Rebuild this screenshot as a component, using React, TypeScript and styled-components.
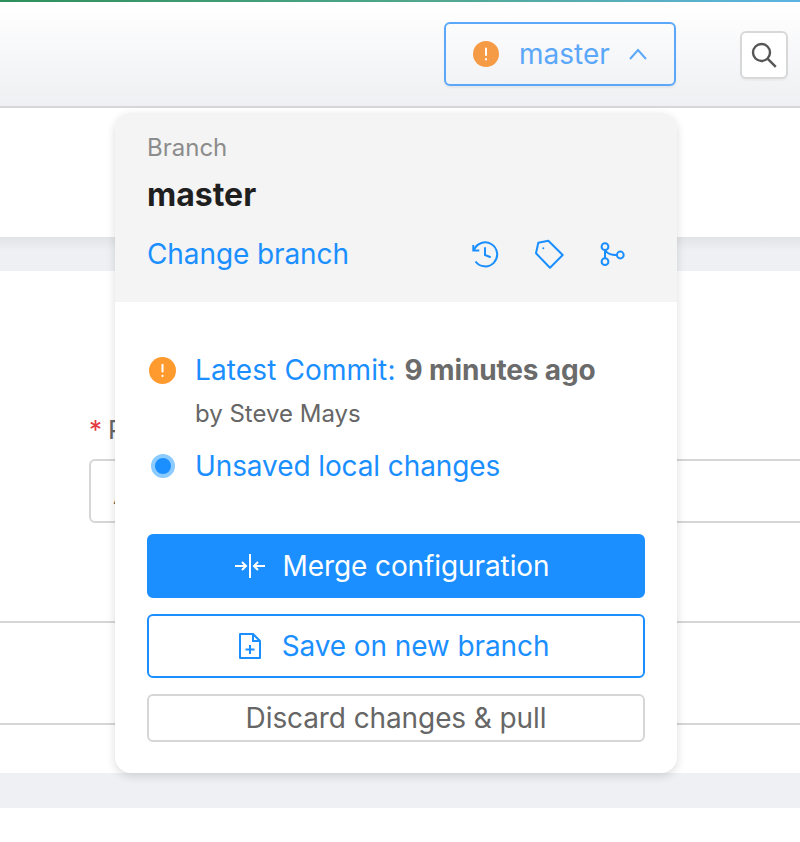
import { createGlobalStyle, styled } from 'styled-components';

const GlobalStyle = createGlobalStyle`
  html, body {
    margin: 0;
    padding: 0;
    background: #fff;
    overflow: hidden;
  }
  body {
    font-family: Inter, "Liberation Sans", sans-serif;
  }
`

const Page = styled.div`
  position: relative;
  width: 800px;
  height: 842px;
  overflow: hidden;
  background: #fff;
`

const TopLine = styled.div`
  height: 2px;
  background: linear-gradient(90deg, #2f8f5b 0%, #52a88f 55%, #5db4e4 100%);
`

const Header = styled.header`
  box-sizing: border-box;
  height: 106px;
  display: flex;
  justify-content: flex-end;
  align-items: flex-start;
  background: linear-gradient(180deg, #fff 0%, #eff0f3 100%);
  border-bottom: 2px solid #d6d6d6;
`

const BranchButton = styled.button`
  box-sizing: border-box;
  width: 232px;
  height: 64px;
  margin-top: 20px;
  margin-right: 64px;
  padding: 0 27px;
  display: flex;
  align-items: center;
  background: transparent;
  border: 2px solid #5ba7f9;
  border-radius: 6px;
  box-shadow: 0 2px 2px rgba(0, 0, 0, 0.05);
  color: #5ba7f9;
  font: 400 28px Inter, sans-serif;
`

const BranchName = styled.span`
  margin-left: 20px;
  margin-right: auto;
`

const SearchButton = styled.button`
  box-sizing: border-box;
  width: 48px;
  height: 48px;
  margin-top: 29px;
  margin-right: 12px;
  padding: 0;
  display: flex;
  align-items: center;
  justify-content: center;
  background: #fff;
  border: 2px solid #d8d8d8;
  border-radius: 6px;
  box-shadow: 0 2px 2px rgba(0, 0, 0, 0.04);
`

const TopSection = styled.section`
  height: 129px;
  background: #fff;
`

const Band = styled.div<{ $shaded?: boolean }>`
  height: ${p => (p.$shaded ? 34 : 35)}px;
  background: ${p => (p.$shaded ? 'linear-gradient(180deg, #e2e3e6 0%, #eff0f3 40%)' : '#eff0f3')};
`

const FormSection = styled.section`
  box-sizing: border-box;
  height: 502px;
  padding-top: 144px;
  background: #fff;
`

const FieldLabel = styled.label`
  display: block;
  height: 44px;
  margin-left: 89px;
  font-size: 26px;
  line-height: 30px;
  color: #666;
`

const Required = styled.span`
  margin-right: 6px;
  color: #e5393f;
`

const TextInput = styled.div`
  box-sizing: border-box;
  width: 800px;
  height: 64px;
  margin-left: 89px;
  padding: 6px 0 0 22px;
  display: flex;
  align-items: center;
  border: 2px solid #d6d6d6;
  border-radius: 6px;
  font-size: 26px;
  color: #666;
`

const Row = styled.div<{ $height: number }>`
  height: ${p => p.$height}px;
  border-bottom: 2px solid #d6d6d6;
`

const Popover = styled.div`
  position: absolute;
  left: 115px;
  top: 113px;
  width: 562px;
  height: 660px;
  overflow: hidden;
  background: #fff;
  border-radius: 16px;
  box-shadow: 0 3px 10px rgba(0, 0, 0, 0.14);
`

const PopoverHead = styled.div`
  box-sizing: border-box;
  height: 189px;
  padding: 20px 32px 0;
  background: #f4f4f4;
`

const SmallLabel = styled.div`
  font-size: 24px;
  line-height: 30px;
  color: #8c8c8c;
`

const CurrentBranch = styled.div`
  margin-top: 14px;
  font-size: 32px;
  line-height: 36px;
  font-weight: 700;
  color: #1f1f1f;
`

const HeadActions = styled.div`
  margin-top: 23px;
  display: flex;
  align-items: center;
`

const LinkText = styled.span`
  font-size: 28px;
  line-height: 36px;
  letter-spacing: -0.1px;
  color: #1b8fff;
`

const CommitLabel = styled(LinkText)`
  letter-spacing: 0.12px;
`

const IconRow = styled.div`
  margin-left: auto;
  margin-right: 16px;
  display: flex;
  align-items: center;
  gap: 32px;
  color: #1b8fff;
`

const PopoverBody = styled.div`
  box-sizing: border-box;
  padding: 50px 32px 0;
`

const StatusRow = styled.div`
  display: flex;
  align-items: center;
  height: 36px;
`

const StatusIcon = styled.div`
  width: 48px;
  flex: none;
  display: flex;
  align-items: center;
  padding-left: 2px;
  box-sizing: border-box;
`

const CommitTime = styled.span`
  margin-left: 9px;
  font-size: 28px;
  line-height: 36px;
  font-weight: 700;
  letter-spacing: -0.15px;
  color: #6b6b6b;
`

const Author = styled.div`
  margin: 10px 0 18px 48px;
  font-size: 24px;
  line-height: 32px;
  color: #666;
`

const Dot = styled.div`
  box-sizing: border-box;
  width: 24px;
  height: 24px;
  margin-left: 2px;
  border-radius: 50%;
  background: #1b8fff;
  border: 4px solid #8ccbff;
`

const Actions = styled.div`
  margin-top: 50px;
  display: flex;
  flex-direction: column;
  gap: 16px;
`

const ActionButton = styled.button<{ $kind: 'primary' | 'outline' | 'plain' }>`
  box-sizing: border-box;
  width: 498px;
  height: ${p => (p.$kind === 'plain' ? 48 : 64)}px;
  padding: 0 ${p => (p.$kind === 'primary' ? 8 : p.$kind === 'outline' ? 4 : 0)}px 0 0;
  display: flex;
  align-items: center;
  justify-content: center;
  gap: ${p => (p.$kind === 'primary' ? 18 : 21)}px;
  border-radius: 6px;
  font: 400 28px Inter, sans-serif;
  letter-spacing: -0.1px;
  background: ${p => (p.$kind === 'primary' ? '#1b8fff' : '#fff')};
  color: ${p => (p.$kind === 'primary' ? '#fff' : p.$kind === 'outline' ? '#1b8fff' : '#666')};
  border: 2px solid ${p => (p.$kind === 'plain' ? '#d6d6d6' : '#1b8fff')};
`

const WarnIcon = ({ size, color }: { size: number; color: string }) => (
  <svg width={size} height={size} viewBox="0 0 26 26">
    <circle cx="13" cy="13" r="13" fill={color} />
    <rect x="12" y="6.5" width="2" height="8.5" rx="1" fill="#fff" />
    <rect x="12" y="17" width="2" height="2.4" rx="1" fill="#fff" />
  </svg>
)

const Icon = styled.svg.attrs({ fill: 'none', stroke: 'currentColor', strokeWidth: 2 })`
  display: block;
  flex: none;
`

export default function App() {
  return (
    <Page>
      <GlobalStyle />
      <TopLine />
      <Header>
        <BranchButton>
          <WarnIcon size={26} color="#f59b45" />
          <BranchName>master</BranchName>
          <Icon width="18" height="12" viewBox="0 0 18 12">
            <path d="M1 11 9 2l8 9" />
          </Icon>
        </BranchButton>
        <SearchButton>
          <svg width="28" height="28" viewBox="0 0 28 28" fill="none" stroke="#555" strokeWidth="2.4">
            <circle cx="11.500" cy="11.500" r="8.500" />
            <path d="m17.800 17.800 8 8" />
          </svg>
        </SearchButton>
      </Header>
      <TopSection />
      <Band $shaded />
      <FormSection>
        <FieldLabel>
          <Required>*</Required>Project
        </FieldLabel>
        <TextInput>A</TextInput>
        <Row $height={98} />
        <Row $height={100} />
      </FormSection>
      <Band />
      <Popover>
        <PopoverHead>
          <SmallLabel>Branch</SmallLabel>
          <CurrentBranch>master</CurrentBranch>
          <HeadActions>
            <LinkText>Change branch</LinkText>
            <IconRow>
              <Icon width="32" height="32" viewBox="0 0 32 32">
                <path d="M4.300 7v5.500h6" />
                <path d="M5 12A12 12 0 1 1 6.500 23.500" />
                <path d="M16 9.300V17l5.700 2.300" />
              </Icon>
              <Icon width="32" height="32" viewBox="0 0 32 32">
                <path d="M5.300 4.700 15.300 2.700 29.700 17 17 29.700 3 15.300Z" strokeLinejoin="round" />
                <circle cx="10.300" cy="10.300" r="1" fill="currentColor" stroke="none" />
              </Icon>
              <Icon width="32" height="32" viewBox="0 0 32 32">
                <circle cx="8" cy="8.700" r="3.400" />
                <circle cx="8" cy="23.700" r="3.400" />
                <circle cx="23.300" cy="17" r="3.400" />
                <path d="M8 12v8M8.500 12c1 3 4 5 11.400 5" />
              </Icon>
            </IconRow>
          </HeadActions>
        </PopoverHead>
        <PopoverBody>
          <StatusRow>
            <StatusIcon>
              <WarnIcon size={27} color="#ff9a2f" />
            </StatusIcon>
            <CommitLabel>Latest Commit:</CommitLabel>
            <CommitTime>9 minutes ago</CommitTime>
          </StatusRow>
          <Author>by Steve Mays</Author>
          <StatusRow>
            <StatusIcon>
              <Dot />
            </StatusIcon>
            <LinkText>Unsaved local changes</LinkText>
          </StatusRow>
          <Actions>
            <ActionButton $kind="primary">
              <Icon width="30" height="24" viewBox="0 0 30 24">
                <path d="M15 0v24M0 12h11M7 8l4 4-4 4M30 12H19M23 8l-4 4 4 4" />
              </Icon>
              Merge configuration
            </ActionButton>
            <ActionButton $kind="outline">
              <Icon width="22" height="26" viewBox="0 0 22 26">
                <path d="M1 1h13l7 7v17H1Z" strokeLinejoin="round" />
                <path d="M14 1v7h7M11 12v9M6.500 16.500h9" />
              </Icon>
              Save on new branch
            </ActionButton>
            <ActionButton $kind="plain">Discard changes &amp; pull</ActionButton>
          </Actions>
        </PopoverBody>
      </Popover>
    </Page>
  )
}
